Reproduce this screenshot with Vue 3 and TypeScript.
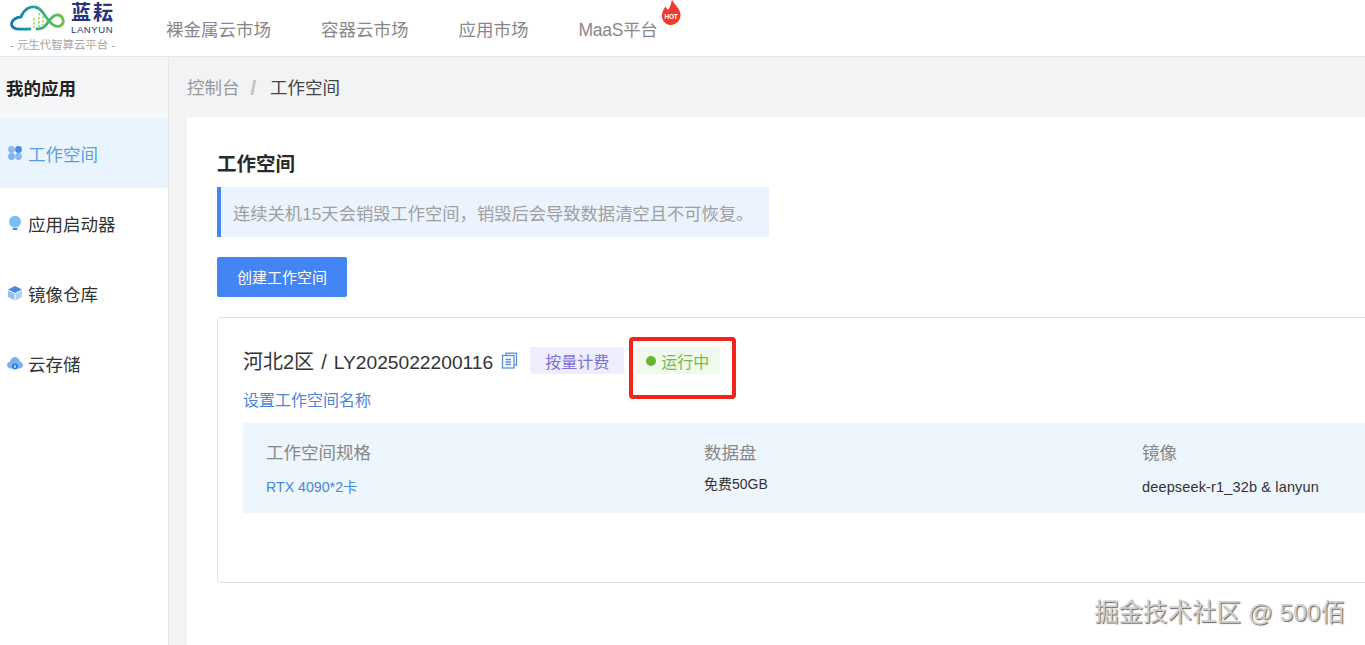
<template>
  <div class="page">
    <header class="topbar">
      <div class="logo">
        <div class="logo-main">
          <svg class="logo-cloud" width="56" height="28" viewBox="0 0 56 28" fill="none">
            <defs>
              <linearGradient id="cloudGrad" x1="0" y1="0" x2="1" y2="0">
                <stop offset="0" stop-color="#1474b8" />
                <stop offset="0.45" stop-color="#22a79c" />
                <stop offset="1" stop-color="#76c043" />
              </linearGradient>
            </defs>
            <path
              d="M20 24 C10 24 4 25 2 21 C0 16 6 12 11 12 C14 4 20 1 25 2 C31 3 33 8 36 12 C40 18 45 23 50 21 C55 19 54 11 48 10 C43 9 39 16 36 20 C33 24 30 24 27 24"
              stroke="url(#cloudGrad)"
              stroke-width="2.8"
              stroke-linecap="round"
            />
            <path d="M24 13 V23 M29 8 V23 M33 11 V23" stroke="#a5d25c" stroke-width="1.6" stroke-dasharray="2.5 1.5" />
          </svg>
          <div class="logo-name">
            <span class="logo-cn">蓝耘</span>
            <span class="logo-en">LANYUN</span>
          </div>
        </div>
        <div class="logo-sub">- 元生代智算云平台 -</div>
      </div>
      <nav class="nav">
        <a v-for="item in navItems" :key="item" class="nav-item">{{ item }}</a>
        <a class="nav-item nav-hot">
          MaaS平台
          <svg class="hot-icon" width="20" height="27" viewBox="0 0 20 27">
            <path
              d="M11 0 C11.5 4 17 7 19 13 C21 20 16 26 10 26 C4 26 0 21 1 15 C1.5 12 3 10 4.5 7.5 C5.5 9.5 6.5 10.5 7.5 10.5 C9 8 10.5 4 11 0 Z"
              fill="#ef3b2d"
            />
            <text x="10" y="20" class="hot-text" text-anchor="middle">HOT</text>
          </svg>
        </a>
      </nav>
    </header>

    <div class="body">
      <aside class="sidebar">
        <div class="side-title">我的应用</div>
        <div
          v-for="item in menu"
          :key="item.label"
          class="side-item"
          :class="{ active: item.active }"
        >
          <svg class="side-icon" width="16" height="16" viewBox="0 0 16 16">
            <template v-if="item.icon === 'grid'">
              <circle cx="4.5" cy="4.5" r="3.4" fill="#8db9f2" />
              <circle cx="11.5" cy="4.5" r="3.4" fill="#4a87e8" />
              <circle cx="4.5" cy="11.5" r="3.4" fill="#7fb0f0" />
              <circle cx="11.5" cy="11.5" r="3.4" fill="#8db9f2" />
            </template>
            <template v-else-if="item.icon === 'bulb'">
              <circle cx="8" cy="6.8" r="6" fill="#7dbcf8" />
              <rect x="5.5" y="13" width="5" height="2" rx="1" fill="#3f8bea" />
            </template>
            <template v-else-if="item.icon === 'box'">
              <path d="M8 1 L15 4.5 L8 8 L1 4.5 Z" fill="#4a87e8" />
              <path d="M1 5.5 L7.5 8.8 V15.5 L1 12 Z" fill="#8fc2f7" />
              <path d="M15 5.5 L8.5 8.8 V15.5 L15 12 Z" fill="#a9d1f9" />
            </template>
            <template v-else>
              <path d="M4 13.5 C1 13.5 0 11.5 0 10 C0 8 1.5 7 3 6.8 C3.6 3.6 5.6 2 8 2 C10.4 2 12.4 3.6 13 6.8 C14.5 7 16 8 16 10 C16 11.5 15 13.5 12 13.5 Z" fill="#7cb2f3" />
              <circle cx="8" cy="11.5" r="3" fill="#2f78e0" />
              <path d="M8 10 V13" stroke="#fff" stroke-width="1.2" />
            </template>
          </svg>
          <span>{{ item.label }}</span>
        </div>
      </aside>

      <main class="main">
        <div class="crumbs">
          <span class="crumb-link">控制台</span>
          <span class="crumb-sep">/</span>
          <span class="crumb-current">工作空间</span>
        </div>
        <section class="panel">
          <h1 class="panel-title">工作空间</h1>
          <div class="notice">连续关机15天会销毁工作空间，销毁后会导致数据清空且不可恢复。</div>
          <button class="create-btn">创建工作空间</button>

          <div class="card">
            <div class="card-head">
              <span class="card-name">河北2区 / <span class="card-id">LY2025022200116</span></span>
              <svg class="copy-icon" width="17" height="17" viewBox="0 0 17 17" fill="none" stroke="#5b8fd9" stroke-width="1.3">
                <path d="M5 3 V1.2 H15.5 V13 H13.5" />
                <rect x="1.5" y="3.5" width="11.5" height="12.5" fill="#fff" />
                <path d="M4.5 7.5 H10 M4.5 10 H10 M4.5 12.5 H10" />
              </svg>
              <span class="tag tag-billing">按量计费</span>
              <span class="tag tag-status"><i class="dot"></i>运行中</span>
              <div class="highlight"></div>
            </div>
            <a class="rename">设置工作空间名称</a>
            <div class="specs">
              <div v-for="spec in specs" :key="spec.label" class="spec" :style="{ width: spec.width + 'px' }">
                <div class="spec-label">{{ spec.label }}</div>
                <div class="spec-value" :class="spec.kind">{{ spec.value }}</div>
              </div>
            </div>
          </div>
        </section>
      </main>
    </div>

    <div class="watermark">掘金技术社区 @ 500佰</div>
  </div>
</template>

<script setup lang="ts">
const navItems = ["裸金属云市场", "容器云市场", "应用市场"];

const menu = [
  { label: "工作空间", icon: "grid", active: true },
  { label: "应用启动器", icon: "bulb", active: false },
  { label: "镜像仓库", icon: "box", active: false },
  { label: "云存储", icon: "cloud", active: false },
];

const specs = [
  { label: "工作空间规格", value: "RTX 4090*2卡", kind: "link", width: 438 },
  { label: "数据盘", value: "免费50GB", kind: "disk", width: 438 },
  { label: "镜像", value: "deepseek-r1_32b & lanyun", kind: "image", width: 300 },
];
</script>

<style>
html,
body {
  margin: 0;
  height: 100%;
  overflow: hidden;
}
</style>

<style scoped>
.page {
  position: relative;
  width: 1365px;
  height: 645px;
  overflow: hidden;
  display: flex;
  flex-direction: column;
  background: #fff;
  color: #333;
  font-family: "Liberation Sans", "Noto Sans CJK SC", sans-serif;
}
.topbar {
  flex: 0 0 57px;
  box-sizing: border-box;
  display: flex;
  align-items: center;
  background: #fff;
  border-bottom: 1px solid #e4e6e8;
}
.logo {
  width: 166px;
  height: 56px;
  box-sizing: border-box;
  padding: 3px 0 0 10px;
}
.logo-main {
  display: flex;
  align-items: flex-start;
  gap: 5px;
}
.logo-cloud {
  margin-top: 2px;
}
.logo-name {
  display: flex;
  flex-direction: column;
  color: #27337f;
  line-height: 1;
}
.logo-cn {
  font-size: 20px;
  font-weight: 700;
  letter-spacing: 2px;
  line-height: 21px;
}
.logo-en {
  font-size: 9.5px;
  letter-spacing: 0.6px;
  line-height: 9px;
  margin-top: 1px;
}
.logo-sub {
  margin-top: 4px;
  font-size: 11.4px;
  line-height: 14px;
  color: #a5a5a5;
  white-space: nowrap;
}
.nav {
  display: flex;
  gap: 50px;
  font-size: 17.5px;
  color: #888;
}
.nav-item {
  white-space: nowrap;
}
.nav-hot {
  position: relative;
  letter-spacing: -0.3px;
}
.hot-icon {
  position: absolute;
  right: -24px;
  top: -17px;
}
.hot-text {
  font-size: 6.5px;
  font-weight: 700;
  fill: #fff;
}
.body {
  flex: 1;
  display: flex;
  min-height: 0;
}
.sidebar {
  flex: 0 0 169px;
  box-sizing: border-box;
  border-right: 1px solid #e4e6e8;
  background: #fff;
}
.side-title {
  height: 61px;
  padding-left: 6px;
  display: flex;
  align-items: center;
  font-size: 17.5px;
  font-weight: 700;
  color: #222;
  background: #f5f6f7;
}
.side-item {
  height: 70px;
  display: flex;
  align-items: center;
  gap: 5px;
  padding-left: 7px;
  font-size: 17.5px;
  color: #333;
}
.side-item.active {
  color: #5a9ee8;
  background: #e9f4fe;
}
.main {
  flex: 1;
  min-width: 0;
  display: flex;
  flex-direction: column;
  background: #f1f3f5;
  padding-left: 18px;
}
.crumbs {
  flex: 0 0 60px;
  box-sizing: border-box;
  padding-bottom: 1px;
  display: flex;
  align-items: center;
  font-size: 17.5px;
}
.crumb-link {
  color: #999;
}
.crumb-sep {
  margin: 0 14px 0 11px;
  padding-top: 3px;
  color: #c0c0c0;
  font-size: 20px;
  font-weight: 700;
}
.crumb-current {
  color: #444;
}
.panel {
  flex: 1;
  box-sizing: border-box;
  background: #fff;
  padding: 34px 0 0 30px;
}
.panel-title {
  margin: 0;
  font-size: 19.5px;
  line-height: 27px;
  font-weight: 700;
  color: #2b2b2b;
}
.notice {
  box-sizing: border-box;
  width: 552px;
  height: 50px;
  margin-top: 9px;
  padding-left: 12px;
  display: flex;
  align-items: center;
  font-size: 17.3px;
  white-space: nowrap;
  color: #a0a0a0;
  background: #eaf3fe;
  border-left: 4px solid #4385f5;
}
.create-btn {
  display: block;
  width: 130px;
  height: 40px;
  margin-top: 20px;
  padding: 0 0 2px;
  border: none;
  border-radius: 2px;
  background: #4385f5;
  color: #fff;
  font-family: inherit;
  font-size: 15px;
}
.card {
  box-sizing: border-box;
  width: 1200px;
  height: 266px;
  margin-top: 20px;
  padding: 27px 0 0 25px;
  border: 1px solid #dcdfe4;
  border-radius: 3px;
}
.card-head {
  position: relative;
  display: flex;
  align-items: center;
  height: 30px;
}
.card-name {
  font-size: 20px;
  word-spacing: 1.5px;
  color: #333;
  white-space: nowrap;
}
.card-id {
  font-size: 19.2px;
}
.copy-icon {
  margin-left: 8px;
}
.tag {
  box-sizing: border-box;
  height: 27px;
  padding-top: 1px;
  display: flex;
  align-items: center;
  font-size: 16px;
  border-radius: 2px;
  white-space: nowrap;
}
.tag-billing {
  margin-left: 12px;
  width: 94px;
  justify-content: center;
  color: #7d6fdc;
  background: #eeeefe;
}
.tag-status {
  margin-left: 12px;
  width: 84px;
  padding-left: 10px;
  gap: 5px;
  color: #76bc4b;
  background: #f0f9eb;
}
.dot {
  width: 10px;
  height: 10px;
  border-radius: 50%;
  background: #67b52f;
}
.highlight {
  position: absolute;
  left: 386px;
  top: -8px;
  width: 107px;
  height: 62px;
  box-sizing: border-box;
  border: 4px solid #f0261c;
  border-radius: 4px;
}
.rename {
  display: block;
  margin-top: 15px;
  font-size: 16px;
  line-height: 22px;
  color: #4a86dc;
}
.specs {
  display: flex;
  height: 90px;
  margin-top: 11px;
  padding-left: 23px;
  background: #edf5fd;
}
.spec {
  flex: none;
}
.spec-label {
  margin-top: 17px;
  font-size: 17.5px;
  line-height: 26px;
  color: #888;
}
.spec-value {
  margin-top: 11px;
  font-size: 14.2px;
  line-height: 20px;
  color: #333;
}
.spec-value.link {
  color: #4a86dc;
}
.spec-value.disk {
  margin-top: 8px;
  font-size: 14px;
}
.spec-value.image {
  font-size: 14.5px;
  letter-spacing: 0.15px;
}
.watermark {
  position: absolute;
  right: 20px;
  bottom: 17px;
  font-size: 24.5px;
  line-height: 30px;
  color: #cfcfcf;
  text-shadow: 1px 1px 1px #666;
}
</style>
